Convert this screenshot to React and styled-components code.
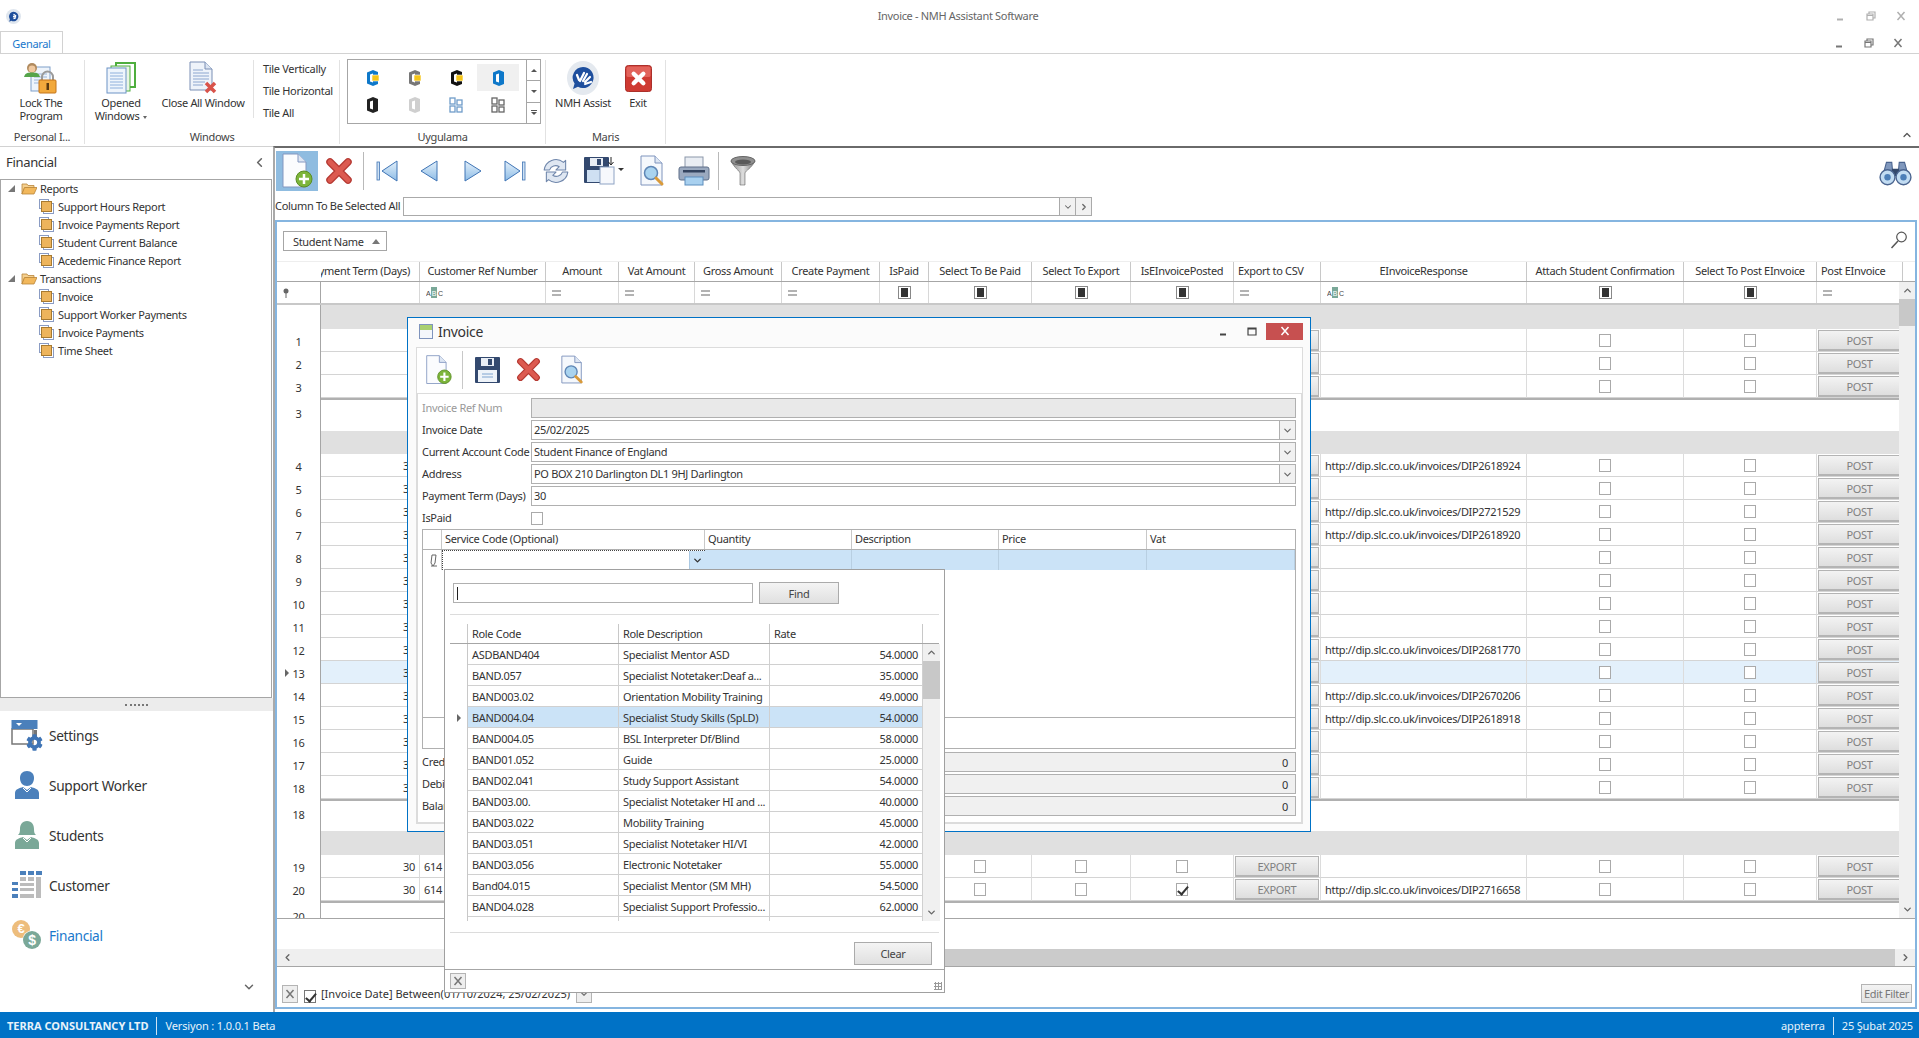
import React from "react";
import styled, { createGlobalStyle } from "styled-components";
import { ChevronDown, ChevronLeft, ChevronRight, ChevronUp } from "lucide-react";
import { FaCog } from "react-icons/fa";

const GlobalStyle = createGlobalStyle`
  html, body { margin: 0; padding: 0; background: #fff; }
  body { font-family: "Noto Sans", "Liberation Sans", sans-serif; font-size: 11px; letter-spacing: -0.32px; color: #333; }
  * { box-sizing: border-box; }
`;

/* ---------- icons ---------- */

const AppLogo = ({ size = 15 }) => (
  <svg width={size} height={size} viewBox="0 0 14 14">
    <circle cx="7" cy="7" r="7" fill="#dfe6ee" />
    <path d="M7 2.5a4.5 4.5 0 1 1-2 8.5L3 12l.6-2.5A4.5 4.5 0 0 1 7 2.5z" fill="#1f4f9c" />
    <path d="M7 5l2.5 1.5M6.5 7l3 .5M7 9l2-.5" stroke="#fff" strokeWidth="1.2" />
  </svg>
);

const LockIcon = () => (
  <svg width="36" height="32" viewBox="0 0 36 32">
    <rect x="8" y="5" width="19" height="24" fill="#eef4fb" stroke="#7f9fc9" />
    <path d="M11 12h13M11 15h13M11 18h9M11 21h9" stroke="#9ab5d8" />
    <circle cx="9" cy="6" r="5" fill="#b08a5e" />
    <circle cx="9" cy="7" r="3.4" fill="#f0c9a0" />
    <path d="M1 15c1-4 4-4.500 8-4.500s7 .5 8 4.500z" fill="#55a44a" />
    <path d="M19 18v-3a5.500 5.500 0 0 1 11 0v3" fill="none" stroke="#9a9a9a" strokeWidth="2" />
    <rect x="16" y="18" width="17" height="13" rx="1" fill="#f2a93c" stroke="#c4741a" />
    <rect x="23.500" y="21" width="2.500" height="7" fill="#5a3a10" />
  </svg>
);

const StackIcon = () => (
  <svg width="30" height="32" viewBox="0 0 30 32">
    <rect x="10" y="1" width="19" height="24" fill="#fff" stroke="#4fae3e" strokeWidth="2" />
    <rect x="5" y="4" width="19" height="25" fill="#eaf5e6" stroke="#4fae3e" />
    <rect x="1" y="6" width="19" height="25" fill="#eff5fc" stroke="#6d93c6" />
    <path d="M4 11h13M4 14h13M4 17h13M4 20h13M4 23h13M4 26h13" stroke="#8fb0dc" />
  </svg>
);

const CloseDocIcon = () => (
  <svg width="30" height="34" viewBox="0 0 30 34">
    <path d="M2 1h15l7 7v21H2z" fill="#eef3fa" stroke="#7b8fb5" />
    <path d="M17 1v7h7" fill="#dce5f2" stroke="#7b8fb5" />
    <path d="M5 9h10M5 12h16M5 15h16M5 18h16M5 21h12M5 24h10" stroke="#8ca6cf" />
    <path d="M18 22l9 9M27 22l-9 9" stroke="#d9534a" strokeWidth="3.500" />
  </svg>
);

const OfficeGlyph = ({ color, badge, fade }) => (
  <svg width="16" height="18" viewBox="0 0 16 18" opacity={fade ? 0.35 : 1}>
    <path d="M9 1l5 2v12l-5 2-6-2.500V3.500z" fill={color} />
    <path d="M6 5.500l3-1v9l-3-1z" fill="#fff" />
    {badge && <rect x="8" y="6" width="7" height="6" fill="#f5c518" stroke="#fff" strokeWidth=".6" />}
  </svg>
);

const TileGlyph = ({ color }) => (
  <svg width="14" height="16" viewBox="0 0 14 16" fill="none" stroke={color} strokeWidth="1.300">
    <rect x="1" y="1" width="5" height="6" />
    <rect x="8" y="3" width="5" height="5" />
    <rect x="1" y="9" width="5" height="6" />
    <rect x="8" y="10" width="5" height="5" />
  </svg>
);

const AssistIcon = () => (
  <svg width="32" height="34" viewBox="0 0 32 34">
    <ellipse cx="16" cy="17" rx="16" ry="17" fill="#e4e9ef" />
    <path d="M16 6a10.500 10.500 0 1 1-5 19.700L6 28l1.600-5.500A10.500 10.500 0 0 1 16 6z" fill="#1e4f9e" />
    <path d="M13 20l4-8M16 20l4-7M18 21l5-5M18 23l6-2M12 19l-2-5" stroke="#fff" strokeWidth="2.200" strokeLinecap="round" />
  </svg>
);

const ExitIcon = () => (
  <svg width="27" height="27" viewBox="0 0 28 28">
    <rect x=".5" y=".5" width="27" height="27" rx="3" fill="#cf3a32" stroke="#a82a24" />
    <rect x="1.500" y="1.500" width="25" height="11" rx="2" fill="#e2635b" />
    <path d="M9 9l10 10M19 9L9 19" stroke="#fff" strokeWidth="4.500" strokeLinecap="round" />
  </svg>
);

const NewDocIcon = ({ small }) => (
  <svg width={small ? 27 : 32} height={small ? 32 : 36} viewBox="0 0 32 36">
    <path d="M2 1h15l8 8v25H2z" fill="#fbfcfe" stroke="#8397c0" />
    <path d="M17 1v8h8" fill="#dde6f3" stroke="#8397c0" />
    <circle cx="23" cy="26" r="8" fill="#7db53a" stroke="#5a8d25" />
    <path d="M23 21v10M18 26h10" stroke="#fff" strokeWidth="2.500" />
  </svg>
);

const RedXIcon = ({ size = 28 }) => (
  <svg width={size} height={size} viewBox="0 0 28 28">
    <path d="M5 5l18 18M23 5L5 23" stroke="#b63a33" strokeWidth="7.500" strokeLinecap="round" />
    <path d="M5 5l18 18M23 5L5 23" stroke="#dc5a50" strokeWidth="5" strokeLinecap="round" />
  </svg>
);

const Tri = ({ dir, bar }) => (
  <svg width="26" height="26" viewBox="0 0 26 26">
    <defs>
      <linearGradient id={`tri${dir}${bar ? 1 : 0}`} x1="0" y1="0" x2="0" y2="1">
        <stop offset="0" stopColor="#e4f0fa" />
        <stop offset="1" stopColor="#8dbce6" />
      </linearGradient>
    </defs>
    <g transform={dir === "left" ? "" : "translate(26 0) scale(-1 1)"}>
      {bar && <rect x="2" y="4" width="2.500" height="18" fill="#cfe2f4" stroke="#3f74b5" strokeWidth=".8" />}
      <path d={bar ? "M7 13L22 3v20z" : "M4 13L20 3v20z"} fill={`url(#tri${dir}${bar ? 1 : 0})`} stroke="#3f74b5" strokeLinejoin="round" />
    </g>
  </svg>
);

const RefreshIcon = () => (
  <svg width="30" height="30" viewBox="0 0 28 28" fill="none">
    <path d="M3 13a11 11 0 0 1 18-7l2-2v9h-9l3-3a6 6 0 0 0-9 3z" fill="#dfe7f2" stroke="#6f86ab" strokeLinejoin="round" />
    <path d="M25 15a11 11 0 0 1-18 7l-2 2v-9h9l-3 3a6 6 0 0 0 9-3z" fill="#dfe7f2" stroke="#6f86ab" strokeLinejoin="round" />
  </svg>
);

const SaveIcon = ({ plain }) => (
  <svg width={plain ? 27 : 42} height={plain ? 28 : 30} viewBox={plain ? "0 0 27 28" : "0 0 42 30"}>
    <rect x="1" y="1" width="25" height="26" rx="1" fill="#33496f" />
    <rect x="7" y="2" width="13" height="8" fill="#e8edf4" />
    <rect x="14" y="3" width="4" height="6" fill="#33496f" />
    <rect x="4" y="14" width="19" height="12" fill={plain ? "#eef3f9" : "#cfe0f2"} />
    {plain && <path d="M8 18h11M8 21h11" stroke="#7fa4cf" />}
    {!plain && <rect x="17" y="11" width="14" height="17" fill="#f6f8fc" stroke="#8ea3c4" />}
    {!plain && <path d="M28 1v7M25.500 6L28 9l2.500-3" fill="none" stroke="#222" />}
    {!plain && <path d="M35 12h6l-3 3z" fill="#333" />}
  </svg>
);

const PreviewIcon = ({ small }) => (
  <svg width={small ? 25 : 27} height={small ? 30 : 32} viewBox="0 0 27 32">
    <path d="M2 1h14l7 7v22H2z" fill="#f5f8fc" stroke="#7f94bd" />
    <path d="M16 1v7h7" fill="#dde6f3" stroke="#7f94bd" />
    <circle cx="12" cy="18" r="6.500" fill="#a9d3ef" stroke="#5f86b5" strokeWidth="1.500" />
    <path d="M17 23l6 6" stroke="#d99a3a" strokeWidth="3" strokeLinecap="round" />
  </svg>
);

const PrintIcon = () => (
  <svg width="32" height="30" viewBox="0 0 32 30">
    <rect x="7" y="1" width="18" height="11" fill="#e9edf3" stroke="#8b97aa" />
    <rect x="1" y="11" width="30" height="13" rx="2" fill="#9aa9bf" stroke="#5e6f89" />
    <rect x="5" y="14" width="22" height="2.500" fill="#33435e" />
    <rect x="7" y="21" width="18" height="8" fill="#a8d0ef" stroke="#5c8ebd" />
  </svg>
);

const FunnelIcon = () => (
  <svg width="28" height="32" viewBox="0 0 28 32">
    <defs>
      <linearGradient id="fun" x1="0" x2="1">
        <stop offset="0" stopColor="#8a8a8a" />
        <stop offset=".5" stopColor="#dedede" />
        <stop offset="1" stopColor="#777" />
      </linearGradient>
    </defs>
    <path d="M2 6c4 8 8 9 9 12v12h5V18c1-3 6-4 10-12z" fill="url(#fun)" stroke="#666" strokeWidth=".6" />
    <ellipse cx="14" cy="6" rx="12" ry="4.500" fill="#8f8f8f" stroke="#666" />
    <ellipse cx="14" cy="7" rx="8" ry="2.500" fill="#5a5a5a" />
  </svg>
);

const BinocularsIcon = () => (
  <svg width="33" height="26" viewBox="0 0 31 24">
    <path d="M4 13L7 2h5l1 11zM27 13L24 2h-5l-1 11z" fill="#8098bd" stroke="#4a648f" />
    <rect x="12" y="8" width="7" height="7" fill="#34496b" />
    <circle cx="8" cy="16" r="7" fill="#c2dcf2" stroke="#4a648f" strokeWidth="1.300" />
    <circle cx="23" cy="16" r="7" fill="#c2dcf2" stroke="#4a648f" strokeWidth="1.300" />
    <circle cx="8" cy="16" r="3" fill="#4d7fb8" />
    <circle cx="23" cy="16" r="3" fill="#4d7fb8" />
  </svg>
);

const SearchGlyph = () => (
  <svg width="18" height="18" viewBox="0 0 18 18" fill="none" stroke="#555">
    <circle cx="11.500" cy="6" r="4.800" strokeWidth="1.200" />
    <path d="M8 10l-6.500 7" strokeWidth="1.500" />
  </svg>
);

const FolderIcon = () => (
  <svg width="16" height="13" viewBox="0 0 16 13">
    <path d="M1 2h5l1 1.500h6V6H3.500L1 12z" fill="#f4cf8e" stroke="#b9853a" strokeWidth=".8" />
    <path d="M1 12l2.500-6.500H16L13 12z" fill="#f2b85c" stroke="#b9853a" strokeWidth=".8" />
  </svg>
);

const LeafIcon = () => (
  <svg width="15" height="15" viewBox="0 0 15 15">
    <rect x=".5" y=".5" width="9" height="9" fill="#fff" stroke="#8a9cc4" />
    <rect x="4.500" y="4.500" width="10" height="10" fill="#fff" stroke="#8a9cc4" />
    <rect x="2.500" y="2.500" width="10" height="10" fill="#edb45c" stroke="#a87a30" />
  </svg>
);

const SettingsIcon = () => (
  <svg width="32" height="32" viewBox="0 0 32 32">
    <path d="M1 10v15h21V10z" fill="#fff" stroke="#777" strokeWidth="1.500" />
    <rect x=".5" y="1" width="26" height="9" fill="#4b80bb" />
    <path d="M5 4h6l-3 3z" fill="#fff" />
    <rect x="23" y="11" width="3" height="9" fill="#777" />
    <FaCog x="15" y="15" size={17} color="#3f74b5" />
  </svg>
);

const PersonIcon = ({ color, female }) => (
  <svg width="26" height="30" viewBox="0 0 26 30">
    <path d={female ? "M13 1c5 0 7 4 7 8s1 5 2 6H4c1-1 2-2 2-6s2-8 7-8z" : "M13 1c4.500 0 7 3 7 7 0 5-3 8-7 8s-7-3-7-8c0-4 2.500-7 7-7z"} fill={color} />
    <path d="M1 29v-6c0-4 5-5 8-6l4 3 4-3c3 1 8 2 8 6v6z" fill={color} />
    <path d="M9 18l4 4 4-4" fill="none" stroke="#fff" strokeWidth="1" />
  </svg>
);

const CustomerIcon = () => (
  <svg width="32" height="30" viewBox="0 0 32 30">
    <path d="M9 1h6v4H9zM17 1h6v4h-6zM25 1h6v4h-6zM1 12h6v3H1zM1 18h6v3H1zM1 24h6v4H1z" fill="#4b80bb" />
    <path d="M9 7h6v4H9zM17 7h6v4h-6zM9 13h14v3H9zM9 18h14v3H9zM9 24h14v4H9zM25 7h5v21h-5z" fill="#bcbcbc" />
  </svg>
);

const CoinsIcon = () => (
  <svg width="30" height="30" viewBox="0 0 30 30">
    <circle cx="9" cy="9" r="9" fill="#edbd7c" />
    <text x="9" y="13" textAnchor="middle" fontSize="13" fontWeight="700" fill="#fff" fontFamily="Liberation Sans, sans-serif">€</text>
    <circle cx="20" cy="20" r="9.500" fill="#fff" />
    <circle cx="20" cy="20" r="9" fill="#7aa898" />
    <text x="20" y="25" textAnchor="middle" fontSize="14" fontWeight="700" fill="#fff" fontFamily="Liberation Sans, sans-serif">$</text>
  </svg>
);

const WindowGlyph = ({ kind, color }) => (
  <svg width="10" height="10" viewBox="0 0 10 10" fill="none" stroke={color} strokeWidth="1.200">
    {kind === "min" && <path d="M1 8.500h6" strokeWidth="2" />}
    {kind === "restore" && <path d="M3 3V1h6v6H7M1 3h6v6H1zM1 4.500h6" />}
    {kind === "max" && <path d="M1 2h8v7H1zM1 3h8" />}
    {kind === "close" && <path d="M1.500 1l7 8M8.500 1l-7 8" strokeWidth="1.500" />}
  </svg>
);

const Pin = () => (
  <svg width="8" height="10" viewBox="0 0 8 10">
    <circle cx="4" cy="3" r="2.500" fill="#666" />
    <path d="M4 5v5" stroke="#666" />
  </svg>
);

const AbcGlyph = () => (
  <svg width="18" height="11" viewBox="0 0 18 11">
    <rect x="5" y="0" width="6" height="11" fill="#7aa898" />
    <text x="0" y="8.500" fontSize="7" fill="#444" fontFamily="Liberation Sans, sans-serif">A</text>
    <text x="5.800" y="8.500" fontSize="7" fill="#fff" fontFamily="Liberation Sans, sans-serif">B</text>
    <text x="12" y="8.500" fontSize="7" fill="#444" fontFamily="Liberation Sans, sans-serif">C</text>
  </svg>
);

const EqGlyph = () => (
  <svg width="9" height="6" viewBox="0 0 9 6">
    <path d="M0 1h9M0 5h9" stroke="#666" />
  </svg>
);

const Pencil = () => (
  <svg width="9" height="13" viewBox="0 0 9 13" fill="none" stroke="#666">
    <path d="M3 1h4l-1 8-2 3-2-3zM2 12h6" />
  </svg>
);

const RowArrow = styled.span`
  width: 0;
  height: 0;
  border-left: 4px solid #666;
  border-top: 4px solid transparent;
  border-bottom: 4px solid transparent;
`;

/* ---------- page frame ---------- */

const Page = styled.div`
  position: relative;
  width: 1919px;
  height: 1038px;
  overflow: hidden;
  display: flex;
  flex-direction: column;
  background: #fff;
`;

const TitleBar = styled.div`
  height: 32px;
  flex: none;
  display: grid;
  grid-template-columns: 1fr auto 1fr;
  align-items: center;
  padding: 0 13px 0 6px;
`;

const TitleText = styled.div`
  color: #666;
  margin: 0 0 2px 4px;
`;

const WinButtons = styled.div`
  display: flex;
  gap: ${({ $gap }) => $gap}px;
  align-items: center;
  justify-content: flex-end;
  align-self: center;
`;

const TabStrip = styled.div`
  height: 22px;
  flex: none;
  display: flex;
  align-items: flex-end;
  justify-content: space-between;
  border-bottom: 1px solid #d2d2d2;
  padding-right: 16px;
`;

const Tab = styled.div`
  width: 63px;
  height: 22px;
  display: flex;
  align-items: center;
  justify-content: center;
  padding-top: 1px;
  color: #1a78cc;
  background: #fff;
  border: 1px solid #d2d2d2;
  border-bottom: 0;
`;

const Ribbon = styled.div`
  height: 92px;
  flex: none;
  display: flex;
  position: relative;
`;

const RibbonGroup = styled.div`
  width: ${({ $w }) => $w}px;
  display: flex;
  flex-direction: column;
  margin: 6px 0 2px;
  border-right: 1px solid #e2e2e2;
`;

const GroupBody = styled.div`
  flex: 1;
  display: flex;
  align-items: flex-start;
  padding-left: ${({ $pl }) => $pl || 0}px;
  gap: ${({ $gap }) => $gap || 0}px;
`;

const GroupLabel = styled.div`
  height: 14px;
  line-height: 14px;
  text-align: center;
  color: #444;
`;

const LargeBtn = styled.div`
  width: ${({ $w }) => $w}px;
  flex: none;
  margin-right: ${({ $mr }) => $mr || 0}px;
  display: flex;
  flex-direction: column;
  align-items: center;
  text-align: center;
  line-height: 13px;
  color: #333;
  white-space: ${({ $nowrap }) => ($nowrap ? "nowrap" : "normal")};
`;

const BtnIcon = styled.div`
  height: 36px;
  display: flex;
  align-items: center;
  justify-content: center;
`;

const MiniCaret = styled.span`
  display: inline-block;
  margin-left: 4px;
  vertical-align: middle;
  border-top: 3px solid #666;
  border-left: 2px solid transparent;
  border-right: 2px solid transparent;
`;

const TileCol = styled.div`
  display: flex;
  flex-direction: column;
  gap: 9px;
  padding: 2px 0 0 9px;
  border-left: 1px solid #e2e2e2;
  height: 58px;
  line-height: 13px;
  white-space: nowrap;
`;

const Gallery = styled.div`
  width: 194px;
  height: 65px;
  margin: -1px 0 0 7px;
  display: flex;
  border: 1px solid #a6a6a6;
`;

const GalleryGrid = styled.div`
  flex: 1;
  display: grid;
  grid-template-columns: repeat(4, 42px);
  grid-auto-rows: 27px;
  padding: 4px 0 0 3px;
`;

const GalleryCell = styled.div`
  display: flex;
  align-items: center;
  justify-content: center;
  background: ${({ $on }) => ($on ? "#f0f0f0" : "transparent")};
`;

const GalleryScroll = styled.div`
  width: 14px;
  display: flex;
  flex-direction: column;
  border-left: 1px solid #a6a6a6;
`;

const GalleryStep = styled.div`
  flex: 1;
  display: flex;
  flex-direction: column;
  gap: 1px;
  align-items: center;
  justify-content: center;
  & + & { border-top: 1px solid #a6a6a6; }
`;

const StepTri = styled.span`
  width: 0;
  height: 0;
  border-left: 3px solid transparent;
  border-right: 3px solid transparent;
  border-top: ${({ $up }) => ($up ? "0" : "3px solid #555")};
  border-bottom: ${({ $up }) => ($up ? "3px solid #555" : "0")};
`;

const StepBar = styled.span`
  width: 6px;
  height: 1px;
  background: #555;
`;

const RibbonCollapse = styled.div`
  position: absolute;
  right: 6px;
  bottom: 5px;
  display: flex;
  color: #555;
`;

const Body = styled.div`
  flex: 1;
  display: flex;
  min-height: 0;
`;

const StatusBar = styled.div`
  height: 26px;
  flex: none;
  display: flex;
  align-items: center;
  justify-content: space-between;
  background: #0072c6;
  color: #e8f2fa;
  padding: 1px 6px 0 7px;
`;

const StatusGroup = styled.div`
  display: flex;
  align-items: center;
`;

const StatusItem = styled.div`
  height: 18px;
  line-height: 18px;
  padding-right: 8px;
  margin-right: 8px;
  border-right: ${({ $sep }) => ($sep ? "1px solid #cfe3f4" : "0")};
  font-weight: ${({ $bold }) => ($bold ? 700 : 400)};
  letter-spacing: ${({ $bold }) => ($bold ? "0" : "-0.15px")};
  &:last-child { padding-right: 0; margin-right: 0; }
`;

/* ---------- left navigation ---------- */

const Side = styled.aside`
  width: 273px;
  flex: none;
  display: flex;
  flex-direction: column;
  border-top: 1px solid #d2d2d2;
`;

const SideHead = styled.div`
  height: 32px;
  flex: none;
  display: flex;
  align-items: center;
  justify-content: space-between;
  padding: 0 6px 2px;
  font-size: 13px;
  color: #333;
`;

const Tree = styled.div`
  height: 519px;
  flex: none;
  margin-right: 1px;
  border: 1px solid #a6a6a6;
`;

const TreeRow = styled.div`
  height: 18px;
  display: flex;
  align-items: center;
  gap: ${({ $leaf }) => ($leaf ? 4 : 3)}px;
  padding: 0 0 2px ${({ $leaf }) => ($leaf ? 38 : 7)}px;
  white-space: nowrap;
`;

const Expander = styled.span`
  width: 0;
  height: 0;
  margin-right: 3px;
  border-bottom: 7px solid #777;
  border-left: 7px solid transparent;
`;

const Splitter = styled.div`
  height: 13px;
  flex: none;
  display: flex;
  align-items: center;
  justify-content: center;
  background: #ececec;
  &::after {
    content: "";
    width: 23px;
    border-top: 2px dotted #777;
  }
`;

const NavList = styled.div`
  flex: 1;
  position: relative;
`;

const NavItem = styled.div`
  height: 50px;
  display: flex;
  align-items: center;
  padding-bottom: 2px;
  font-size: 13.7px;
  color: ${({ $active }) => ($active ? "#1a78cc" : "#333")};
`;

const NavIcon = styled.div`
  width: 49px;
  flex: none;
  display: flex;
  justify-content: center;
  padding-left: 5px;
`;

const NavMore = styled.div`
  position: absolute;
  right: 17px;
  bottom: 18px;
  display: flex;
  color: #666;
`;

/* ---------- main area ---------- */

const Main = styled.main`
  flex: 1;
  min-width: 0;
  display: flex;
  flex-direction: column;
  border-top: 2px solid #6a6a6a;
  border-left: 2px solid #a9a9a9;
`;

const Toolbar = styled.div`
  height: 47px;
  flex: none;
  display: flex;
  align-items: flex-start;
  padding: 3px 7px 0 1px;
`;

const ToolBtn = styled.div`
  width: ${({ $w }) => $w || 42}px;
  height: 40px;
  flex: none;
  display: flex;
  align-items: center;
  justify-content: center;
  background: ${({ $on }) => ($on ? "#8fbce0" : "transparent")};
`;

const ToolSep = styled.div`
  width: 1px;
  height: 38px;
  margin: 1px 3px 0;
  flex: none;
  background: #b9b9b9;
`;

const ToolEnd = styled.div`
  display: flex;
  margin-top: 9px;
`;

const Spacer = styled.div`
  flex: 1;
`;

const ColumnRow = styled.div`
  height: 25px;
  flex: none;
  display: flex;
  align-items: flex-start;
  padding-top: 2px;
  gap: 5px;
  white-space: nowrap;
`;

const ColumnLabel = styled.div`
  width: 123px;
  line-height: 18px;
`;

const ColumnCombo = styled.div`
  width: 689px;
  height: 19px;
  display: flex;
  justify-content: flex-end;
  border: 1px solid #aaa;
`;

const ComboBtn = styled.div`
  width: 16px;
  display: flex;
  align-items: center;
  justify-content: center;
  color: #666;
  background: #f1f1f1;
  border-left: 1px solid #aaa;
`;

const GridPanel = styled.div`
  flex: 1;
  min-height: 0;
  display: flex;
  flex-direction: column;
  margin: 0 2px 3px 0;
  border: 2px solid #85b5e0;
`;

const GroupBar = styled.div`
  height: 39px;
  flex: none;
  display: flex;
  align-items: flex-start;
  justify-content: space-between;
  padding: 9px 6px 0 6px;
`;

const GroupChip = styled.div`
  width: 104px;
  height: 20px;
  display: flex;
  align-items: center;
  gap: 8px;
  padding-left: 9px;
  border: 1px solid #a6a6a6;
  &::after {
    content: "";
    border-bottom: 5px solid #777;
    border-left: 4px solid transparent;
    border-right: 4px solid transparent;
  }
`;

const SearchBtn = styled.div`
  display: flex;
  margin: 0 1px 0 0;
`;

const COLUMNS = [
  { key: "term", title: "Payment Term (Days)", w: 99, clip: true },
  { key: "ref", title: "Customer Ref Number", w: 126, filter: "abc" },
  { key: "amount", title: "Amount", w: 73, filter: "eq" },
  { key: "vat", title: "Vat Amount", w: 76, filter: "eq" },
  { key: "gross", title: "Gross Amount", w: 87, filter: "eq" },
  { key: "create", title: "Create Payment", w: 98, filter: "eq" },
  { key: "paid", title: "IsPaid", w: 49, filter: "check", check: true },
  { key: "toPay", title: "Select To Be Paid", w: 103, filter: "check", check: true },
  { key: "toExport", title: "Select To Export", w: 99, filter: "check", check: true },
  { key: "posted", title: "IsEInvoicePosted", w: 103, filter: "check", check: true },
  { key: "csv", title: "Export to CSV", w: 87, filter: "eq", left: true, action: "EXPORT" },
  { key: "resp", title: "EInvoiceResponse", w: 206, filter: "abc" },
  { key: "attach", title: "Attach Student Confirmation", w: 157, filter: "check", check: true },
  { key: "toPost", title: "Select To Post EInvoice", w: 133, filter: "check", check: true },
  { key: "post", title: "Post EInvoice", w: 86, filter: "eq", left: true, action: "POST" },
];

const GRID_COLS = `44px ${COLUMNS.map((c) => `${c.w}px`).join(" ")}`;

const HeaderRow = styled.div`
  height: 21px;
  flex: none;
  display: grid;
  grid-template-columns: ${GRID_COLS};
  border-top: 1px solid #eee;
  border-bottom: 1px solid #a6a6a6;
`;

const HeadCell = styled.div`
  display: flex;
  align-items: center;
  overflow: hidden;
  white-space: nowrap;
  padding: 0 ${({ $clip }) => ($clip ? 9 : 4)}px 2px 4px;
  justify-content: ${({ $align }) => $align};
  border-right: 1px solid #c8c8c8;
  &:first-child { border-right: 0; }
`;

const DataArea = styled.div`
  height: 637px;
  flex: none;
  display: flex;
  border-bottom: 1px solid #a6a6a6;
`;

const DataRows = styled.div`
  width: 1622px;
  flex: none;
  overflow: hidden;
`;

const FilterRow = styled.div`
  height: 23px;
  display: grid;
  grid-template-columns: ${GRID_COLS};
  border-bottom: 2px solid #c8c8c8;
`;

const FilterCell = styled.div`
  display: flex;
  align-items: center;
  justify-content: ${({ $center }) => ($center ? "center" : "flex-start")};
  padding-left: ${({ $center }) => ($center ? 0 : 6)}px;
  border-right: 1px solid #d8d8d8;
  &:first-child { padding-left: 5px; border-right: 1px solid #a6a6a6; }
`;

const FilterCheck = styled.span`
  width: 13px;
  height: 13px;
  display: flex;
  align-items: center;
  justify-content: center;
  border: 1px solid #888;
  &::after {
    content: "";
    width: 7px;
    height: 9px;
    background: #333;
  }
`;

const Row = styled.div`
  height: ${({ $h }) => $h}px;
  display: grid;
  grid-template-columns: ${GRID_COLS};
  background: ${({ $hl }) => ($hl ? "#e3f0fb" : "#fff")};
`;

const RowHead = styled.div`
  position: relative;
  display: flex;
  align-items: ${({ $top }) => ($top ? "flex-start" : "center")};
  justify-content: center;
  padding-top: ${({ $top }) => ($top ? 8 : 2)}px;
  background: #fff;
  border-right: 1px solid #a6a6a6;
  font-size: 11px;
`;

const RowMark = styled.span`
  position: absolute;
  left: 8px;
  top: 8px;
  display: flex;
`;

const GroupFill = styled.div`
  grid-column: 2 / -1;
  background: #e0e0e0;
`;

const FooterFill = styled.div`
  grid-column: 2 / -1;
  border-top: 2px solid #b0b0b0;
`;

const Cell = styled.div`
  display: flex;
  align-items: center;
  justify-content: ${({ $align }) => $align};
  padding: 0 ${({ $pad }) => $pad}px;
  overflow: hidden;
  white-space: nowrap;
  border-right: 1px solid #dcdcdc;
  border-bottom: 1px solid #d4d4d4;
`;

const Check = styled.span`
  position: relative;
  width: 12px;
  height: 13px;
  flex: none;
  background: #fff;
  border: 1px solid ${({ $dark }) => ($dark ? "#777" : "#aaa")};
  &::after {
    content: "";
    display: ${({ $on }) => ($on ? "block" : "none")};
    position: absolute;
    left: 3px;
    top: 0;
    width: 4px;
    height: 9px;
    border: solid #333;
    border-width: 0 2px 2px 0;
    transform: rotate(40deg);
  }
`;

const GridAction = styled.div`
  flex: 1;
  height: 21px;
  display: flex;
  align-items: center;
  justify-content: center;
  padding-top: 1px;
  color: #808080;
  background: linear-gradient(#f3f3f3, #dedede);
  border: 1px solid #b4b4b4;
  border-bottom-width: 2px;
`;

const VScroll = styled.div`
  width: 16px;
  flex: none;
  display: flex;
  flex-direction: column;
  align-items: center;
  background: #f0f0f0;
  color: #666;
`;

const ScrollEnd = styled.div`
  height: ${({ $h }) => $h || 18}px;
  flex: none;
  width: 100%;
  display: flex;
  align-items: center;
  justify-content: center;
`;

const ScrollThumb = styled.div`
  width: 100%;
  height: ${({ $h }) => $h}px;
  flex: none;
  background: ${({ $c }) => $c || "#c8c8c8"};
`;

const GridGap = styled.div`
  height: 30px;
  flex: none;
`;

const HScroll = styled.div`
  height: 18px;
  flex: none;
  display: flex;
  align-items: stretch;
  background: #efefef;
  color: #666;
  border-bottom: 1px solid #a6a6a6;
`;

const HEnd = styled.div`
  width: 20px;
  flex: none;
  display: flex;
  align-items: center;
  justify-content: center;
`;

const HThumb = styled.div`
  flex: 1;
  margin-left: 500px;
  background: #cbcbcb;
`;

const FilterBar = styled.div`
  height: 39px;
  flex: none;
  display: flex;
  align-items: flex-end;
  padding: 0 3px 3px 5px;
  gap: 6px;
  white-space: nowrap;
`;

const SquareBtn = styled.div`
  width: 16px;
  height: ${({ $h }) => $h || 18}px;
  flex: none;
  display: flex;
  align-items: center;
  justify-content: center;
  color: #777;
  background: #eee;
  border: 1px solid #b4b4b4;
`;

const FilterText = styled.div`
  line-height: 18px;
  margin-left: -1px;
  letter-spacing: 0;
`;

const EditFilter = styled.div`
  width: 51px;
  height: 19px;
  display: flex;
  align-items: center;
  justify-content: center;
  color: #777;
  background: linear-gradient(#f3f3f3, #e2e2e2);
  border: 1px solid #b4b4b4;
`;

/* ---------- invoice window ---------- */

const Dialog = styled.div`
  position: absolute;
  left: 407px;
  top: 317px;
  width: 904px;
  height: 515px;
  display: flex;
  flex-direction: column;
  padding: 0 7px 7px 8px;
  background: #fbfbfb;
  border: 1px solid #0072c6;
`;

const DialogHead = styled.div`
  height: 29px;
  flex: none;
  display: flex;
  align-items: center;
  justify-content: space-between;
  padding-left: 3px;
  font-size: 14px;
`;

const DialogTitle = styled.div`
  display: flex;
  align-items: center;
  gap: 5px;
  padding-bottom: 2px;
`;

const DialogIcon = styled.span`
  width: 14px;
  height: 15px;
  display: block;
  background: linear-gradient(#a9d070 0 40%, #f4f7fb 40%);
  border: 1px solid #7f94bd;
`;

const DialogButtons = styled.div`
  display: flex;
  align-items: center;
  height: 100%;
`;

const DialogBtn = styled.div`
  width: ${({ $w }) => $w}px;
  height: 17px;
  display: flex;
  align-items: center;
  justify-content: center;
  background: ${({ $close }) => ($close ? "#c75050" : "transparent")};
  margin-bottom: 3px;
`;

const DialogInner = styled.div`
  flex: 1;
  display: flex;
  flex-direction: column;
  min-height: 0;
  background: #fff;
  border: 1px solid #dcdcdc;
`;

const DialogTools = styled.div`
  height: 45px;
  flex: none;
  display: flex;
  align-items: center;
  padding: 0 0 2px 5px;
`;

const DialogTool = styled.div`
  width: ${({ $w }) => $w}px;
  flex: none;
  display: flex;
  justify-content: center;
`;

const DialogSep = styled.div`
  width: 1px;
  height: 38px;
  margin: 0 8px;
  background: #c8c8c8;
`;

const FormPanel = styled.div`
  flex: 1;
  display: flex;
  flex-direction: column;
  gap: 2px;
  padding: 4px 5px 0 4px;
  border: 1px solid #dcdcdc;
`;

const FormRow = styled.div`
  height: 20px;
  flex: none;
  display: flex;
  align-items: center;
`;

const FormLabel = styled.label`
  width: 109px;
  flex: none;
  padding-bottom: 2px;
  white-space: nowrap;
  color: ${({ $muted }) => ($muted ? "#999" : "#333")};
`;

const Field = styled.div`
  flex: 1;
  height: 20px;
  display: flex;
  align-items: center;
  justify-content: ${({ $right }) => ($right ? "flex-end" : "flex-start")};
  padding: 0 ${({ $right }) => ($right ? 7 : 0)}px 0 2px;
  background: ${({ $fill }) => $fill || "#fff"};
  border: 1px solid #b0b0b0;
`;

const FieldText = styled.span`
  flex: 1;
  padding-bottom: 2px;
`;

const FieldDrop = styled.div`
  width: 16px;
  height: 100%;
  display: flex;
  align-items: center;
  justify-content: center;
  color: #666;
  background: #f1f1f1;
  border-left: 1px solid #b0b0b0;
`;

const DetailGrid = styled.div`
  height: 220px;
  flex: none;
  margin: -1px 0 1px;
  display: flex;
  flex-direction: column;
  border: 1px solid #b0b0b0;
`;

const DETAIL_COLS = "19px 263px 147px 147px 148px 1fr";

const DetailHead = styled.div`
  height: 20px;
  flex: none;
  display: grid;
  grid-template-columns: ${DETAIL_COLS};
  border-bottom: 1px solid #b0b0b0;
`;

const DetailHeadCell = styled.div`
  display: flex;
  align-items: center;
  padding: 0 0 2px 3px;
  border-right: 1px solid #c8c8c8;
  &:last-child { border-right: 0; }
`;

const EditRow = styled.div`
  height: 20px;
  flex: none;
  display: grid;
  grid-template-columns: ${DETAIL_COLS};
  background: #cbe3f7;
`;

const EditMark = styled.div`
  display: flex;
  align-items: center;
  justify-content: center;
  padding-left: 2px;
  background: #fff;
  border-right: 1px solid #c8c8c8;
`;

const EditCombo = styled.div`
  display: flex;
  justify-content: flex-end;
  background: #fff;
  border-top: 1px dotted #444;
  border-left: 1px dotted #444;
`;

const EditDrop = styled.div`
  width: 16px;
  display: flex;
  align-items: center;
  justify-content: center;
  color: #333;
  background: #cbe3f7;
  border-left: 1px solid #aac8e2;
`;

const EditCell = styled.div`
  border-right: 1px solid #b8cfe2;
`;

const DetailBody = styled.div`
  flex: 1;
`;

const DetailFoot = styled.div`
  height: 31px;
  flex: none;
  border-top: 1px solid #b0b0b0;
`;

/* ---------- role code lookup ---------- */

const Lookup = styled.div`
  position: absolute;
  left: 444px;
  top: 569px;
  width: 501px;
  height: 424px;
  display: flex;
  flex-direction: column;
  background: #fff;
  border: 1px solid #a0a0a0;
`;

const LookupSearch = styled.div`
  height: 45px;
  flex: none;
  display: flex;
  align-items: flex-start;
  gap: 6px;
  margin: 0 5px;
  padding: 12px 0 0 3px;
  border-bottom: 1px solid #dcdcdc;
`;

const LookupInput = styled.div`
  width: 300px;
  height: 20px;
  margin-top: 1px;
  display: flex;
  align-items: center;
  padding-left: 3px;
  border: 1px solid #b0b0b0;
  &::before {
    content: "";
    width: 1px;
    height: 13px;
    background: #222;
  }
`;

const PlainBtn = styled.div`
  width: ${({ $w }) => $w}px;
  height: ${({ $h }) => $h || 22}px;
  flex: none;
  display: flex;
  align-items: center;
  justify-content: center;
  color: #444;
  background: linear-gradient(#f4f4f4, #e0e0e0);
  border: 1px solid #ababab;
`;

const ROLE_COLS = "18px 151px 151px 153px 1fr";

const LookupGrid = styled.div`
  height: 297px;
  flex: none;
  margin: 9px 5px 0;
  display: flex;
  flex-direction: column;
`;

const RoleHead = styled.div`
  height: 20px;
  flex: none;
  display: grid;
  grid-template-columns: ${ROLE_COLS};
  border-bottom: 1px solid #a6a6a6;
`;

const RoleHeadCell = styled.div`
  display: flex;
  align-items: center;
  padding-left: 4px;
  border-right: 1px solid #c8c8c8;
  &:last-child { border-right: 0; }
`;

const RoleBody = styled.div`
  flex: 1;
  min-height: 0;
  display: flex;
`;

const RoleRows = styled.div`
  width: 473px;
  flex: none;
  overflow: hidden;
`;

const RoleRow = styled.div`
  height: 21px;
  display: grid;
  grid-template-columns: 18px 151px 151px 153px;
`;

const RoleMark = styled.div`
  display: flex;
  align-items: center;
  justify-content: center;
  border-right: 1px solid #c8c8c8;
`;

const RoleCell = styled.div`
  display: flex;
  align-items: center;
  justify-content: ${({ $right }) => ($right ? "flex-end" : "flex-start")};
  padding: 0 4px;
  white-space: nowrap;
  overflow: hidden;
  background: ${({ $sel }) => ($sel ? "#cbe3f7" : "#fff")};
  border-right: 1px solid #d0d0d0;
  border-bottom: 1px solid #d0d0d0;
`;

const RoleScroll = styled(VScroll)`
  width: 17px;
`;

const LookupActions = styled.div`
  height: 37px;
  flex: none;
  display: flex;
  justify-content: flex-end;
  margin: 11px 5px 0;
  padding: 9px 7px 0 0;
  border-top: 1px solid #dcdcdc;
`;

const LookupFoot = styled.div`
  flex: 1;
  position: relative;
  display: flex;
  align-items: center;
  padding-left: 5px;
  border-top: 1px solid #a6a6a6;
`;

const Grip = styled.span`
  position: absolute;
  right: 2px;
  bottom: 2px;
  width: 8px;
  height: 8px;
  background-image: radial-gradient(#999 1px, transparent 1.2px);
  background-size: 3px 3px;
`;

/* ---------- data ---------- */

const TREE = [
  { name: "Reports", items: ["Support Hours Report", "Invoice Payments Report", "Student Current Balance", "Acedemic Finance Report"] },
  { name: "Transactions", items: ["Invoice", "Support Worker Payments", "Invoice Payments", "Time Sheet"] },
];

const NAV = [
  { name: "Settings", icon: <SettingsIcon /> },
  { name: "Support Worker", icon: <PersonIcon color="#4b80bb" /> },
  { name: "Students", icon: <PersonIcon color="#7aa898" female /> },
  { name: "Customer", icon: <CustomerIcon /> },
  { name: "Financial", icon: <CoinsIcon />, active: true },
];

const RESPONSES = {
  4: "DIP2618924",
  6: "DIP2721529",
  7: "DIP2618920",
  12: "DIP2681770",
  14: "DIP2670206",
  15: "DIP2618918",
  20: "DIP2716658",
};

const range = (a, b) => Array.from({ length: b - a + 1 }, (_, i) => a + i);

const ROWS = [
  { type: "group", h: 24 },
  ...range(1, 3).map((n) => ({ type: "data", n, h: 23 })),
  { type: "foot", n: 3, h: 33 },
  { type: "group", h: 23 },
  ...range(4, 18).map((n) => ({ type: "data", n, h: 23 })),
  { type: "foot", n: 18, h: 32 },
  { type: "group", h: 24 },
  ...range(19, 20).map((n) => ({ type: "data", n, h: 23 })),
  { type: "foot", n: 20, h: 32 },
];

const ROLES = [
  ["ASDBAND404", "Specialist Mentor ASD", "54.0000"],
  ["BAND.057", "Specialist Notetaker:Deaf a...", "35.0000"],
  ["BAND003.02", "Orientation Mobility Training", "49.0000"],
  ["BAND004.04", "Specialist Study Skills (SpLD)", "54.0000"],
  ["BAND004.05", "BSL Interpreter Df/Blind", "58.0000"],
  ["BAND01.052", "Guide", "25.0000"],
  ["BAND02.041", "Study Support Assistant", "54.0000"],
  ["BAND03.00.", "Specialist Notetaker HI and ...", "40.0000"],
  ["BAND03.022", "Mobility Training", "45.0000"],
  ["BAND03.051", "Specialist Notetaker HI/VI", "42.0000"],
  ["BAND03.056", "Electronic Notetaker", "55.0000"],
  ["Band04.015", "Specialist Mentor (SM MH)", "54.5000"],
  ["BAND04.028", "Specialist Support Professio...", "62.0000"],
  ["", "", ""],
];

const cellContent = (col, n) => {
  if (col.check) return <Check $on={col.key === "posted" && n === 20} />;
  if (col.action) return <GridAction>{col.action}</GridAction>;
  if (col.key === "term") return n > 3 ? "30" : null;
  if (col.key === "ref") return n > 18 ? "614" : null;
  if (col.key === "resp" && RESPONSES[n]) return `http://dip.slc.co.uk/invoices/${RESPONSES[n]}`;
  return null;
};

const cellAlign = (col) => {
  if (col.check) return "center";
  if (col.key === "term") return "flex-end";
  return "flex-start";
};

const GridRow = ({ row }) => {
  if (row.type === "group") {
    return (
      <Row $h={row.h}>
        <RowHead />
        <GroupFill />
      </Row>
    );
  }
  if (row.type === "foot") {
    return (
      <Row $h={row.h}>
        <RowHead $top>{row.n}</RowHead>
        <FooterFill />
      </Row>
    );
  }
  return (
    <Row $h={row.h} $hl={row.n === 13}>
      <RowHead>
        {row.n === 13 && (
          <RowMark>
            <RowArrow />
          </RowMark>
        )}
        {row.n}
      </RowHead>
      {COLUMNS.map((col) => (
        <Cell key={col.key} $align={cellAlign(col)} $pad={col.action ? 1 : 4}>
          {cellContent(col, row.n)}
        </Cell>
      ))}
    </Row>
  );
};

const App = () => {
  return (
    <Page>
      <GlobalStyle />
      <TitleBar>
        <AppLogo />
        <TitleText>Invoice - NMH Assistant Software</TitleText>
        <WinButtons $gap={20}>
          <WindowGlyph kind="min" color="#b0b0b0" />
          <WindowGlyph kind="restore" color="#b0b0b0" />
          <WindowGlyph kind="close" color="#b0b0b0" />
        </WinButtons>
      </TitleBar>
      <TabStrip>
        <Tab>Genaral</Tab>
        <WinButtons $gap={19}>
          <WindowGlyph kind="min" color="#777" />
          <WindowGlyph kind="restore" color="#777" />
          <WindowGlyph kind="close" color="#777" />
        </WinButtons>
      </TabStrip>
      <Ribbon>
        <RibbonGroup $w={85}>
          <GroupBody $pl={6}>
            <LargeBtn $w={70}>
              <BtnIcon><LockIcon /></BtnIcon>
              Lock The Program
            </LargeBtn>
          </GroupBody>
          <GroupLabel>Personal I...</GroupLabel>
        </RibbonGroup>
        <RibbonGroup $w={255}>
          <GroupBody $pl={9}>
            <LargeBtn $w={54} $mr={14}>
              <BtnIcon><StackIcon /></BtnIcon>
              <span>
                Opened Windows<MiniCaret />
              </span>
            </LargeBtn>
            <LargeBtn $w={82} $mr={9} $nowrap>
              <BtnIcon><CloseDocIcon /></BtnIcon>
              Close All Window
            </LargeBtn>
            <TileCol>
              <span>Tile Vertically</span>
              <span>Tile Horizontal</span>
              <span>Tile All</span>
            </TileCol>
          </GroupBody>
          <GroupLabel>Windows</GroupLabel>
        </RibbonGroup>
        <RibbonGroup $w={206}>
          <GroupBody>
            <Gallery>
              <GalleryGrid>
                <GalleryCell><OfficeGlyph color="#0e78c9" badge /></GalleryCell>
                <GalleryCell><OfficeGlyph color="#777" badge /></GalleryCell>
                <GalleryCell><OfficeGlyph color="#111" badge /></GalleryCell>
                <GalleryCell $on><OfficeGlyph color="#0e78c9" /></GalleryCell>
                <GalleryCell><OfficeGlyph color="#222" /></GalleryCell>
                <GalleryCell><OfficeGlyph color="#777" fade /></GalleryCell>
                <GalleryCell><TileGlyph color="#6f9cc9" /></GalleryCell>
                <GalleryCell><TileGlyph color="#666" /></GalleryCell>
              </GalleryGrid>
              <GalleryScroll>
                <GalleryStep><StepTri $up /></GalleryStep>
                <GalleryStep><StepTri /></GalleryStep>
                <GalleryStep><StepBar /><StepTri /></GalleryStep>
              </GalleryScroll>
            </Gallery>
          </GroupBody>
          <GroupLabel>Uygulama</GroupLabel>
        </RibbonGroup>
        <RibbonGroup $w={120}>
          <GroupBody $pl={7} $gap={5}>
            <LargeBtn $w={60}>
              <BtnIcon><AssistIcon /></BtnIcon>
              NMH Assist
            </LargeBtn>
            <LargeBtn $w={40}>
              <BtnIcon><ExitIcon /></BtnIcon>
              Exit
            </LargeBtn>
          </GroupBody>
          <GroupLabel>Maris</GroupLabel>
        </RibbonGroup>
        <RibbonCollapse>
          <ChevronUp size={12} strokeWidth={2.5} />
        </RibbonCollapse>
      </Ribbon>
      <Body>
        <Side>
          <SideHead>
            Financial
            <ChevronLeft size={15} strokeWidth={2.5} color="#666" />
          </SideHead>
          <Tree>
            {TREE.map((branch) => (
              <React.Fragment key={branch.name}>
                <TreeRow>
                  <Expander />
                  <FolderIcon />
                  {branch.name}
                </TreeRow>
                {branch.items.map((item) => (
                  <TreeRow key={item} $leaf>
                    <LeafIcon />
                    {item}
                  </TreeRow>
                ))}
              </React.Fragment>
            ))}
          </Tree>
          <Splitter />
          <NavList>
            {NAV.map((item) => (
              <NavItem key={item.name} $active={item.active}>
                <NavIcon>{item.icon}</NavIcon>
                {item.name}
              </NavItem>
            ))}
            <NavMore>
              <ChevronDown size={14} strokeWidth={2.5} />
            </NavMore>
          </NavList>
        </Side>
        <Main>
          <Toolbar>
            <ToolBtn $on><NewDocIcon /></ToolBtn>
            <ToolBtn><RedXIcon /></ToolBtn>
            <ToolSep />
            <ToolBtn><Tri dir="left" bar /></ToolBtn>
            <ToolBtn><Tri dir="left" /></ToolBtn>
            <ToolBtn><Tri dir="right" /></ToolBtn>
            <ToolBtn><Tri dir="right" bar /></ToolBtn>
            <ToolBtn><RefreshIcon /></ToolBtn>
            <ToolBtn $w={54}><SaveIcon /></ToolBtn>
            <ToolBtn><PreviewIcon /></ToolBtn>
            <ToolBtn><PrintIcon /></ToolBtn>
            <ToolSep />
            <ToolBtn><FunnelIcon /></ToolBtn>
            <Spacer />
            <ToolEnd><BinocularsIcon /></ToolEnd>
          </Toolbar>
          <ColumnRow>
            <ColumnLabel>Column To Be Selected All</ColumnLabel>
            <ColumnCombo>
              <ComboBtn><ChevronDown size={10} strokeWidth={2.5} /></ComboBtn>
              <ComboBtn><ChevronRight size={10} strokeWidth={3} /></ComboBtn>
            </ColumnCombo>
          </ColumnRow>
          <GridPanel>
            <GroupBar>
              <GroupChip>Student Name</GroupChip>
              <SearchBtn><SearchGlyph /></SearchBtn>
            </GroupBar>
            <HeaderRow>
              <HeadCell />
              {COLUMNS.map((col) => (
                <HeadCell key={col.key} $clip={col.clip} $align={col.clip ? "flex-end" : col.left ? "flex-start" : "center"}>
                  {col.title}
                </HeadCell>
              ))}
            </HeaderRow>
            <DataArea>
              <DataRows>
                <FilterRow>
                  <FilterCell><Pin /></FilterCell>
                  {COLUMNS.map((col) => (
                    <FilterCell key={col.key} $center={col.filter === "check"}>
                      {col.filter === "abc" && <AbcGlyph />}
                      {col.filter === "eq" && <EqGlyph />}
                      {col.filter === "check" && <FilterCheck />}
                    </FilterCell>
                  ))}
                </FilterRow>
                {ROWS.map((row, i) => (
                  <GridRow key={i} row={row} />
                ))}
              </DataRows>
              <VScroll>
                <ScrollEnd $h={17}><ChevronUp size={11} strokeWidth={3} /></ScrollEnd>
                <ScrollThumb $h={27} />
                <Spacer />
                <ScrollEnd $h={17}><ChevronDown size={11} strokeWidth={3} /></ScrollEnd>
              </VScroll>
            </DataArea>
            <GridGap />
            <HScroll>
              <HEnd><ChevronLeft size={11} strokeWidth={3} /></HEnd>
              <HThumb />
              <HEnd><ChevronRight size={11} strokeWidth={3} /></HEnd>
            </HScroll>
            <FilterBar>
              <SquareBtn><WindowGlyph kind="close" color="#777" /></SquareBtn>
              <Check $on $dark />
              <FilterText>[Invoice Date] Between(01/10/2024, 25/02/2025)</FilterText>
              <SquareBtn><ChevronDown size={10} strokeWidth={3} /></SquareBtn>
              <Spacer />
              <EditFilter>Edit Filter</EditFilter>
            </FilterBar>
          </GridPanel>
        </Main>
      </Body>
      <StatusBar>
        <StatusGroup>
          <StatusItem $sep $bold>TERRA CONSULTANCY LTD</StatusItem>
          <StatusItem>Versiyon : 1.0.0.1 Beta</StatusItem>
        </StatusGroup>
        <StatusGroup>
          <StatusItem $sep>appterra</StatusItem>
          <StatusItem>25 Şubat 2025</StatusItem>
        </StatusGroup>
      </StatusBar>

      <Dialog>
        <DialogHead>
          <DialogTitle>
            <DialogIcon />
            Invoice
          </DialogTitle>
          <DialogButtons>
            <DialogBtn $w={28}><WindowGlyph kind="min" color="#444" /></DialogBtn>
            <DialogBtn $w={28}><WindowGlyph kind="max" color="#444" /></DialogBtn>
            <DialogBtn $w={37} $close><WindowGlyph kind="close" color="#fff" /></DialogBtn>
          </DialogButtons>
        </DialogHead>
        <DialogInner>
          <DialogTools>
            <DialogTool $w={32}><NewDocIcon small /></DialogTool>
            <DialogSep />
            <DialogTool $w={32}><SaveIcon plain /></DialogTool>
            <DialogTool $w={51}><RedXIcon size={25} /></DialogTool>
            <DialogTool $w={36}><PreviewIcon small /></DialogTool>
          </DialogTools>
          <FormPanel>
            <FormRow>
              <FormLabel $muted>Invoice Ref Num</FormLabel>
              <Field $fill="#e9e9e9" />
            </FormRow>
            <FormRow>
              <FormLabel>Invoice Date</FormLabel>
              <Field>
                <FieldText>25/02/2025</FieldText>
                <FieldDrop><ChevronDown size={11} strokeWidth={2.5} /></FieldDrop>
              </Field>
            </FormRow>
            <FormRow>
              <FormLabel>Current Account Code</FormLabel>
              <Field>
                <FieldText>Student Finance of England</FieldText>
                <FieldDrop><ChevronDown size={11} strokeWidth={2.5} /></FieldDrop>
              </Field>
            </FormRow>
            <FormRow>
              <FormLabel>Address</FormLabel>
              <Field>
                <FieldText>PO BOX 210 Darlington DL1 9HJ Darlington</FieldText>
                <FieldDrop><ChevronDown size={11} strokeWidth={2.5} /></FieldDrop>
              </Field>
            </FormRow>
            <FormRow>
              <FormLabel>Payment Term (Days)</FormLabel>
              <Field><FieldText>30</FieldText></Field>
            </FormRow>
            <FormRow>
              <FormLabel>IsPaid</FormLabel>
              <Check />
            </FormRow>
            <DetailGrid>
              <DetailHead>
                <DetailHeadCell />
                <DetailHeadCell>Service Code (Optional)</DetailHeadCell>
                <DetailHeadCell>Quantity</DetailHeadCell>
                <DetailHeadCell>Description</DetailHeadCell>
                <DetailHeadCell>Price</DetailHeadCell>
                <DetailHeadCell>Vat</DetailHeadCell>
              </DetailHead>
              <EditRow>
                <EditMark><Pencil /></EditMark>
                <EditCombo>
                  <EditDrop><ChevronDown size={11} strokeWidth={3} /></EditDrop>
                </EditCombo>
                <EditCell />
                <EditCell />
                <EditCell />
                <EditCell />
              </EditRow>
              <DetailBody />
              <DetailFoot />
            </DetailGrid>
            <FormRow>
              <FormLabel>Credit</FormLabel>
              <Field $fill="#f0f0f0" $right>0</Field>
            </FormRow>
            <FormRow>
              <FormLabel>Debit</FormLabel>
              <Field $fill="#f0f0f0" $right>0</Field>
            </FormRow>
            <FormRow>
              <FormLabel>Balance</FormLabel>
              <Field $fill="#f0f0f0" $right>0</Field>
            </FormRow>
          </FormPanel>
        </DialogInner>
      </Dialog>

      <Lookup>
        <LookupSearch>
          <LookupInput />
          <PlainBtn $w={80}>Find</PlainBtn>
        </LookupSearch>
        <LookupGrid>
          <RoleHead>
            <RoleHeadCell />
            <RoleHeadCell>Role Code</RoleHeadCell>
            <RoleHeadCell>Role Description</RoleHeadCell>
            <RoleHeadCell>Rate</RoleHeadCell>
            <RoleHeadCell />
          </RoleHead>
          <RoleBody>
            <RoleRows>
              {ROLES.map(([code, desc, rate], i) => (
                <RoleRow key={i}>
                  <RoleMark>{i === 3 && <RowArrow />}</RoleMark>
                  <RoleCell $sel={i === 3}>{code}</RoleCell>
                  <RoleCell $sel={i === 3}>{desc}</RoleCell>
                  <RoleCell $sel={i === 3} $right>{rate}</RoleCell>
                </RoleRow>
              ))}
            </RoleRows>
            <RoleScroll>
              <ScrollEnd $h={17}><ChevronUp size={11} strokeWidth={3} /></ScrollEnd>
              <ScrollThumb $h={38} />
              <Spacer />
              <ScrollEnd $h={17}><ChevronDown size={11} strokeWidth={3} /></ScrollEnd>
            </RoleScroll>
          </RoleBody>
        </LookupGrid>
        <LookupActions>
          <PlainBtn $w={78} $h={23}>Clear</PlainBtn>
        </LookupActions>
        <LookupFoot>
          <SquareBtn $h={16}><WindowGlyph kind="close" color="#777" /></SquareBtn>
          <Grip />
        </LookupFoot>
      </Lookup>
    </Page>
  );
};

export default App;
